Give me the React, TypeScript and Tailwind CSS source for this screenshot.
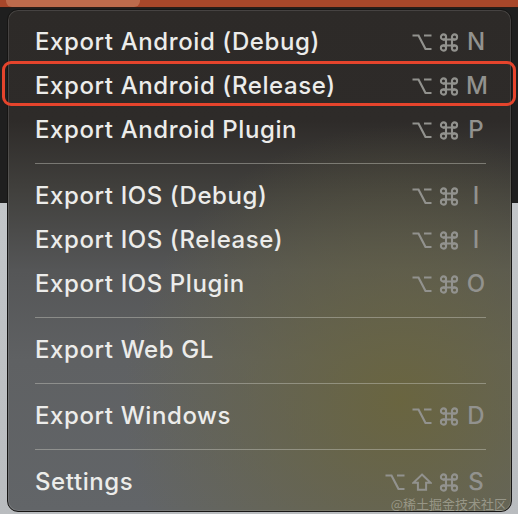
import React from "react";

type Mod = "opt" | "shift" | "cmd";
type Item = { label: string; mods: Mod[]; key?: string };
type Entry = Item | "sep";

const entries: Entry[] = [
  { label: "Export Android (Debug)", mods: ["opt", "cmd"], key: "N" },
  { label: "Export Android (Release)", mods: ["opt", "cmd"], key: "M" },
  { label: "Export Android Plugin", mods: ["opt", "cmd"], key: "P" },
  "sep",
  { label: "Export IOS (Debug)", mods: ["opt", "cmd"], key: "I" },
  { label: "Export IOS (Release)", mods: ["opt", "cmd"], key: "I" },
  { label: "Export IOS Plugin", mods: ["opt", "cmd"], key: "O" },
  "sep",
  { label: "Export Web GL", mods: [] },
  "sep",
  { label: "Export Windows", mods: ["opt", "cmd"], key: "D" },
  "sep",
  { label: "Settings", mods: ["opt", "shift", "cmd"], key: "S" },
];

function ModIcon({ m }: { m: Mod }) {
  if (m === "opt")
    return (
      <svg width="20" height="18" viewBox="0 0 20 18" fill="none" stroke="currentColor" strokeWidth="2.2" strokeLinecap="butt">
        <path d="M0.5 2.5 H6.5 L13.5 16 H19.5 M12 2.5 H19.5" />
      </svg>
    );
  if (m === "shift")
    return (
      <svg width="22" height="20" viewBox="0 0 22 20" fill="none" stroke="currentColor" strokeWidth="2.2" strokeLinejoin="miter">
        <path d="M11 1.8 L20.5 10.8 H15.5 V18.5 H6.5 V10.8 H1.5 Z" />
      </svg>
    );
  return (
    <svg width="20" height="19" viewBox="0 0 20 19" fill="none" stroke="currentColor" strokeWidth="2.1">
      <path d="M7 4 V15 M13 4 V15 M4 6.5 H16 M4 12.5 H16" />
      <circle cx="4.5" cy="4" r="2.6" />
      <circle cx="15.5" cy="4" r="2.6" />
      <circle cx="4.5" cy="15" r="2.6" />
      <circle cx="15.5" cy="15" r="2.6" />
    </svg>
  );
}

function Row({ item }: { item: Item }) {
  return (
    <div className="flex h-[44px] items-center justify-between">
      <span className="text-[24px] font-medium leading-none tracking-[0.6px] text-[#ececea] font-['Inter','Liberation_Sans',sans-serif]">
        {item.label}
      </span>
      {item.key && (
        <span className="flex items-center gap-[7px] text-[#92928e]">
          {item.mods.map((m, i) => (
            <span key={i} className="flex w-[20px] justify-center">
              <ModIcon m={m} />
            </span>
          ))}
          <span className="w-[20px] text-center text-[24px] font-medium leading-none font-['Inter','Liberation_Sans',sans-serif]">
            {item.key}
          </span>
        </span>
      )}
    </div>
  );
}

export default function App() {
  return (
    <div className="relative h-[514px] w-[518px] overflow-hidden bg-[linear-gradient(180deg,#1f1f1f_0px,#1f1f1f_203px,#c3c6c9_203px,#b9bcbf_514px)]">
      <div className="relative h-[8px] border-b border-[#2a1c16] bg-[#a8472a]">
        <div className="absolute left-[6px] top-0 h-[7px] w-[134px] rounded-b-[6px] bg-[#bd6b4c]" />
      </div>

      <div className="absolute left-[7px] top-[9px] h-[503px] w-[505px] overflow-hidden rounded-[11px] border border-[#161514] bg-[radial-gradient(ellipse_55%_55%_at_78%_78%,rgba(106,101,62,0.95),rgba(106,101,62,0)_100%),linear-gradient(180deg,#2d2a28_0%,#2e2b29_22%,#41403d_36%,#555657_52%,#5f6163_70%,#626568_100%)] shadow-[inset_0_0_0_1px_rgba(255,255,255,0.12)]">
        <div className="flex flex-col pl-[27px] pr-[25px] pt-[10px]">
          {entries.map((e, i) =>
            e === "sep" ? (
              <div key={i} className="flex h-[22px] items-center">
                <div className="h-px w-full bg-[rgba(200,200,190,0.45)]" />
              </div>
            ) : (
              <Row key={i} item={e} />
            )
          )}
        </div>
        <div className="absolute bottom-[1px] right-[4px] text-[13px] leading-none text-[rgba(215,215,205,0.45)] font-['Noto_Sans_CJK_SC',sans-serif]">
          @稀土掘金技术社区
        </div>
      </div>

      <div className="absolute left-[2px] top-[61px] h-[45px] w-[514px] rounded-[9px] border-[3.5px] border-[#e5442c]" />
    </div>
  );
}
